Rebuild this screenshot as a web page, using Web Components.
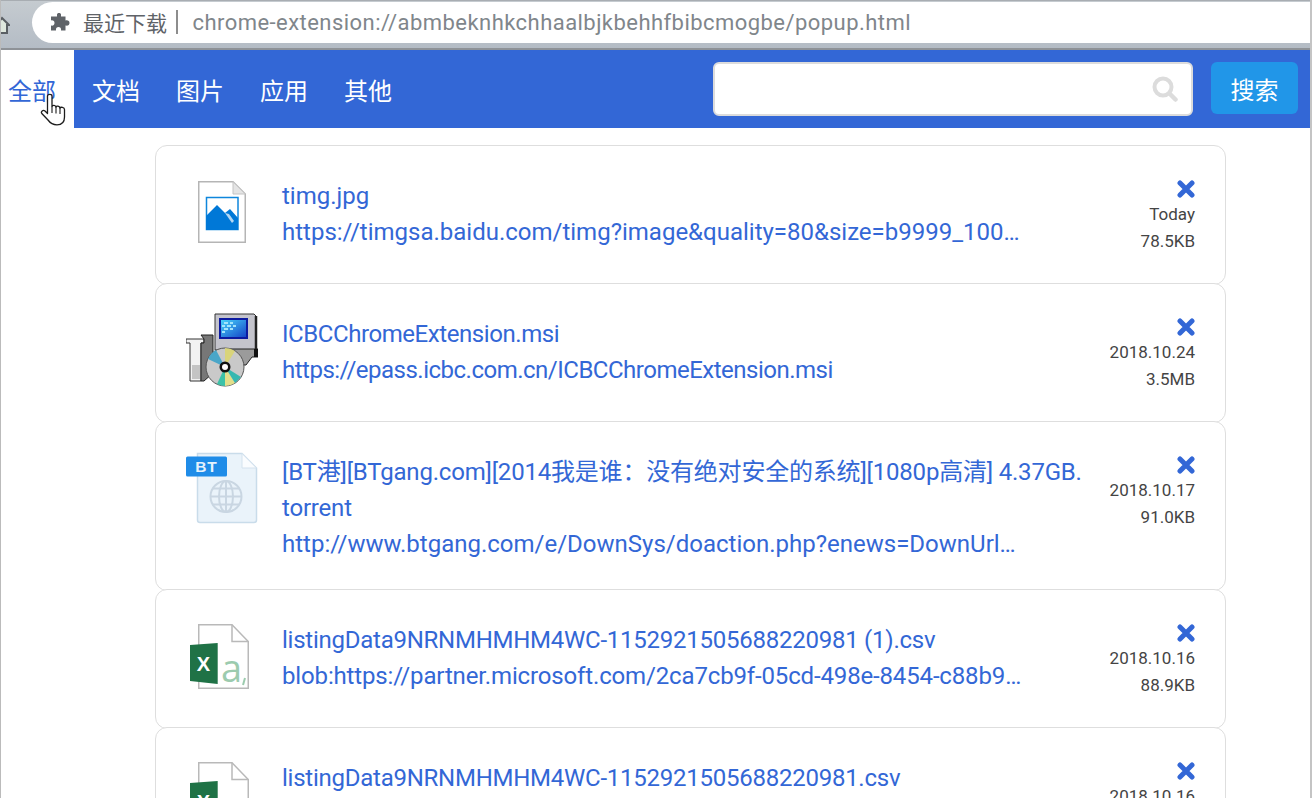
<!DOCTYPE html>
<html lang="zh">
<head>
<meta charset="utf-8">
<title>最近下载</title>
<style>
  html, body { margin: 0; height: 798px; overflow: hidden; background: #fff; }
  body { font-family: Roboto, "Noto Sans CJK SC", sans-serif; }
  .page { height: 798px; box-sizing: border-box; border-left: 1px solid #bbb; border-right: 2px solid #c4c4c4; overflow: hidden; }
</style>
</head>
<body>
<div class="page">
  <browser-bar title-text="最近下载" url="chrome-extension://abmbeknhkchhaalbjkbehhfbibcmogbe/popup.html"></browser-bar>
  <nav-bar></nav-bar>
  <download-list>
    <download-item date="Today" size="78.5KB" icon="image">
      <span slot="name">timg.jpg</span>
      <span slot="url">https://timgsa.baidu.com/timg?image&amp;quality=80&amp;size=b9999_10000&amp;sec=1539</span>
    </download-item>
    <download-item date="2018.10.24" size="3.5MB" icon="msi">
      <span slot="name" style="letter-spacing:-.43px">ICBCChromeExtension.msi</span>
      <span slot="url" style="letter-spacing:-.5px">https://epass.icbc.com.cn/ICBCChromeExtension.msi</span>
    </download-item>
    <download-item date="2018.10.17" size="91.0KB" icon="torrent">
      <span slot="name" style="letter-spacing:-.2px">[BT港][BTgang.com][2014我是谁：没有绝对安全的系统][1080p高清] 4.37GB.<br>torrent</span>
      <span slot="url">http://www.btgang.com/e/DownSys/doaction.php?enews=DownUrl&amp;classid=1&amp;id=1</span>
    </download-item>
    <download-item date="2018.10.16" size="88.9KB" icon="csv">
      <span slot="name" style="letter-spacing:-.25px">listingData9NRNMHMHM4WC-1152921505688220981 (1).csv</span>
      <span slot="url" style="letter-spacing:-.15px">blob:https://partner.microsoft.com/2ca7cb9f-05cd-498e-8454-c88b9e1f0a7d3c</span>
    </download-item>
    <download-item date="2018.10.16" size="88.9KB" icon="csv">
      <span slot="name" style="letter-spacing:-.25px">listingData9NRNMHMHM4WC-1152921505688220981.csv</span>
      <span slot="url" style="letter-spacing:-.15px">blob:https://partner.microsoft.com/2ca7cb9f-05cd-498e-8454-c88b9e1f0a7d3c</span>
    </download-item>
  </download-list>
</div>

<template id="icon-image">
  <svg width="48" height="62" viewBox="0 0 48 62">
    <path d="M.75.75H35L47.250 13V61.250H.75Z" fill="#fff" stroke="#b5b5b5" stroke-width="1.500"/>
    <path d="M35 .75V13H47.250Z" fill="#e4e4e4" stroke="#c4c4c4"/>
    <rect x="8.500" y="16.500" width="31.500" height="32" fill="#fff" stroke="#0f86dc" stroke-width="1.500"/>
    <path d="M8 49V35L19 24L27 32L32 28L40 37V49Z" fill="#0078d7"/>
    <path d="M27 32L34 42L36 40L31 33Z" fill="#fff" opacity=".7"/>
  </svg>
</template>

<template id="icon-msi">
  <svg width="72" height="74" viewBox="0 0 72 74">
    <defs>
      <linearGradient id="screen" x1="0" y1="0" x2="1" y2="1">
        <stop offset="0" stop-color="#46d2fb"/>
        <stop offset="1" stop-color="#1546c8"/>
      </linearGradient>
    </defs>
    <path d="M29 1H68L70 3V37H29Z" fill="#c4c4cc" stroke="#333"/>
    <path d="M70 3V38" stroke="#222" stroke-width="2.500"/>
    <rect x="33" y="5" width="29" height="21" fill="#0c1aa0"/>
    <rect x="35" y="7" width="25" height="17" fill="url(#screen)"/>
    <path d="M38 9h4v2h-4zM44 9h3v2h-3zM36 12h3v2h-3zM41 12h4v2h-4zM47 12h3v2h-3zM38 15h4v2h-4zM44 15h3v2h-3zM36 18h3v2h-3z" fill="#a2e3fb"/>
    <path d="M40 36H72V44H66L60 52H40Z" fill="#9b9b9b" stroke="#222"/>
    <path d="M68 36H72V44H68Z" fill="#111"/>
    <path d="M0 26H18V30H15V68H4V30H0Z" fill="#f2f2f2" stroke="#333"/>
    <path d="M15 22H27V60L18 68H15V30H18V26Z" fill="#777" stroke="#222"/>
    <path d="M6 52h8v14h-8z" fill="#c4c4c4"/>
    <circle cx="39" cy="54" r="19" fill="#c9c9c9" stroke="#555"/>
    <path d="M39 35A19 19 0 0 1 49 38L39 54Z" fill="#d9d47a"/>
    <path d="M39 73A19 19 0 0 0 49 70L39 54Z" fill="#e2df8a"/>
    <path d="M22 46A19 19 0 0 1 30 37L39 54Z" fill="#4aa6c8"/>
    <path d="M39 73A19 19 0 0 1 31 71L39 54Z" fill="#3cc2a8"/>
    <path d="M49 70L55 64L39 54Z" fill="#36b8b0"/>
    <circle cx="39" cy="54" r="5.500" fill="#111"/>
    <circle cx="39" cy="54" r="3" fill="#fff"/>
  </svg>
</template>

<template id="icon-torrent">
  <svg width="72" height="72" viewBox="0 0 72 72">
    <path d="M11.500 1.500H56L70.500 16V68Q70.500 70.500 68 70.500H14Q11.500 70.500 11.500 68Z" fill="#eaf3fa" stroke="#c9dcea" stroke-width="1.500"/>
    <path d="M56 1.500V16H70.500Z" fill="#fafcfe" stroke="#d4e2ee"/>
    <rect x="0" y="4.500" width="41" height="20" rx="1.500" fill="#1f8ce8"/>
    <text x="20.500" y="20" text-anchor="middle" font-family="Liberation Sans, sans-serif" font-weight="700" font-size="15.500" letter-spacing="1" fill="#e6f2fc">BT</text>
    <g fill="none" stroke="#c9d6e2" stroke-width="2">
      <circle cx="40" cy="44.500" r="15.500"/>
      <ellipse cx="40" cy="44.500" rx="7" ry="15.500"/>
      <path d="M40 29V60M24.500 44.500H55.500M27 36.500H53M27 52.500H53"/>
    </g>
  </svg>
</template>

<template id="icon-csv">
  <svg style="margin-right:5px" width="59" height="65" viewBox="0 0 59 65">
    <path d="M8.750.75H42L58.250 17.500V64.250H8.750Z" fill="#fff" stroke="#b9b9b9" stroke-width="1.500"/>
    <path d="M42 .75V17.500H58.250" fill="none" stroke="#b9b9b9" stroke-width="1.500"/>
    <path d="M0 21L27.700 19V60L0 57Z" fill="#1f7246"/>
    <text x="13.500" y="47" text-anchor="middle" font-family="Liberation Sans, sans-serif" font-weight="700" font-size="20" fill="#fff">X</text>
    <text x="31" y="58" font-family="Open Sans, sans-serif" font-size="38" fill="#9ccbae">a</text>
    <path d="M55 54L53 61" stroke="#9ccbae" stroke-width="2" fill="none"/>
  </svg>
</template>

<script>
class BrowserBar extends HTMLElement {
  constructor() {
    super();
    this.attachShadow({mode: 'open'});
  }

  connectedCallback() {
    this.shadowRoot.innerHTML = `
      <style>
        :host {
          display: flex;
          height: 50px;
          box-sizing: border-box;
          padding-top: 2px;
          background: linear-gradient(#c5cbd0, #b4bcc5);
          border-top: 1px solid #a8adb2;
          border-bottom: 2px solid #8e9297;
          overflow: hidden;
        }
        .home { width: 31px; flex: none; }
        .home svg { display: block; margin-top: 12px; margin-left: -1px; }
        .omni {
          flex: 1;
          height: 41px;
          margin-top: -1px;
          display: flex;
          align-items: center;
          padding-bottom: 1px;
          box-sizing: border-box;
          background: #fff;
          border-radius: 21px 0 0 21px;
          white-space: nowrap;
        }
        .omni svg { margin-left: 18px; flex: none; }
        .title { margin-left: 13px; color: #5f6368; font-size: 21px; }
        .sep { width: 1.500px; height: 24px; margin: 0 15px 0 9px; background: #8d8d8d; }
        .url { color: #80868b; font-size: 22px; letter-spacing: .45px; }
      </style>
      <div class="home">
        <svg width="10" height="20" viewBox="0 0 10 20"><path d="M-4 10L2 3L9 10H7V18H-4" fill="#dfe8de" stroke="#5a5f64" stroke-width="2"/></svg>
      </div>
      <div class="omni">
        <svg width="20" height="20" viewBox="0 0 20 20"><path d="M7 2.500C7 .5 11 .5 11 2.500V4.500H15.500V8.500C18 8 19.500 9 19.500 11S18 14 15.500 13.500V18.500H11C11.500 16 10 15 8.500 15S5.500 16 6 18.500H1V13.500C3 14 4.500 13 4.500 11S3 8 1 8.500V4.500H7Z" fill="#5f6368"/></svg>
        <span class="title">${this.getAttribute('title-text')}</span>
        <span class="sep"></span>
        <span class="url">${this.getAttribute('url')}</span>
      </div>
    `;
  }
}

class NavBar extends HTMLElement {
  constructor() {
    super();
    this.attachShadow({mode: 'open'});
  }

  connectedCallback() {
    this.shadowRoot.innerHTML = `
      <style>
        :host {
          display: flex;
          align-items: stretch;
          height: 78px;
          background: #3367d6;
          font-size: 24px;
          position: relative;
        }
        .tab { display: flex; align-items: center; padding: 0 18px; color: #fff; }
        .tab.active { padding: 0 18px 0 7px; background: #fff; color: #3367d6; }
        form { margin-left: auto; display: flex; gap: 18px; padding: 12px 12px 0 0; }
        .search {
          width: 480px;
          height: 54px;
          box-sizing: border-box;
          display: flex;
          align-items: center;
          justify-content: flex-end;
          padding-right: 13px;
          background: #fff;
          border: 2px solid #dcdcdc;
          border-radius: 6px;
        }
        button {
          width: 87px;
          height: 52px;
          border: 0;
          border-radius: 6px;
          background: #2196e8;
          color: #fff;
          font: inherit;
        }
        .hand { position: absolute; left: 39px; top: 43px; }
      </style>
      <div class="tab active">全部</div>
      <div class="tab">文档</div>
      <div class="tab">图片</div>
      <div class="tab">应用</div>
      <div class="tab">其他</div>
      <form>
        <div class="search">
          <svg width="26" height="26" viewBox="0 0 26 26"><circle cx="11" cy="11" r="8.500" fill="none" stroke="#dcdcdc" stroke-width="4"/><path d="M17.500 17.500L23.500 23.500" stroke="#dcdcdc" stroke-width="4.500" stroke-linecap="round"/></svg>
        </div>
        <button type="button">搜索</button>
      </form>
      <svg class="hand" width="26" height="33" viewBox="0 0 26 33">
        <path d="M7.500 3C7.500 .8 12 .8 12 3V13.500C12.500 11.800 15.500 12 16 14C16.500 12.500 19.500 12.800 20 15C20.500 13.800 24.500 14 24.500 16.500V24C24.500 29 22 31.800 17 31.800C12.500 31.800 10.500 30.500 8 27L1.800 20.500C.5 18.500 3 16.500 5 18L7.500 20.500Z" fill="#fff" stroke="#1c1c1c" stroke-width="1.300" stroke-linejoin="round"/>
        <path d="M12 13.500V20M16 14V20.500M20 15V21" stroke="#1c1c1c" stroke-width="1.100"/>
      </svg>
    `;
  }
}

class DownloadList extends HTMLElement {
  constructor() {
    super();
    this.attachShadow({mode: 'open'});
    this.shadowRoot.innerHTML = `
      <style>
        :host {
          display: flex;
          flex-direction: column;
          padding: 17px 84px 0 154px;
        }
      </style>
      <slot></slot>
    `;
  }
}

class DownloadItem extends HTMLElement {
  constructor() {
    super();
    this.attachShadow({mode: 'open'});
  }

  connectedCallback() {
    const icon = document.getElementById('icon-' + this.getAttribute('icon'));
    this.shadowRoot.innerHTML = `
      <style>
        :host {
          display: flex;
          align-items: flex-start;
          flex: none;
          box-sizing: border-box;
          min-height: 140px;
          margin-bottom: -2px;
          padding: 30px 30px 28px 29.500px;
          background: #fff;
          border: 1.500px solid #dedede;
          border-radius: 12px;
          color: #3367d6;
          font-size: 24px;
          line-height: 36px;
        }
        .icon {
          flex: none;
          width: 72px;
          height: 72px;
          margin-right: 24.500px;
          display: flex;
          align-items: center;
          justify-content: center;
        }
        .text { flex: 1; min-width: 0; padding-top: 2px; }
        .name { width: 808px; }
        .url {
          width: 745px;
          white-space: nowrap;
          overflow: hidden;
          text-overflow: ellipsis;
        }
        .meta {
          flex: none;
          margin: 4px 0 0 auto;
          display: flex;
          flex-direction: column;
          align-items: flex-end;
          color: #444;
          font-size: 17px;
          line-height: 27px;
        }
        .close { display: block; margin-bottom: 2.500px; }
      </style>
      <div class="icon"></div>
      <div class="text">
        <div class="name"><slot name="name"></slot></div>
        <div class="url"><slot name="url"></slot></div>
      </div>
      <div class="meta">
        <svg class="close" width="18" height="18" viewBox="0 0 18 18"><path d="M3 3L15 15M15 3L3 15" stroke="#3367d6" stroke-width="5" stroke-linecap="round"/></svg>
        <span>${this.getAttribute('date')}</span>
        <span>${this.getAttribute('size')}</span>
      </div>
    `;
    this.shadowRoot.querySelector('.icon').append(icon.content.cloneNode(true));
  }
}

customElements.define('browser-bar', BrowserBar);
customElements.define('nav-bar', NavBar);
customElements.define('download-list', DownloadList);
customElements.define('download-item', DownloadItem);
</script>
</body>
</html>
